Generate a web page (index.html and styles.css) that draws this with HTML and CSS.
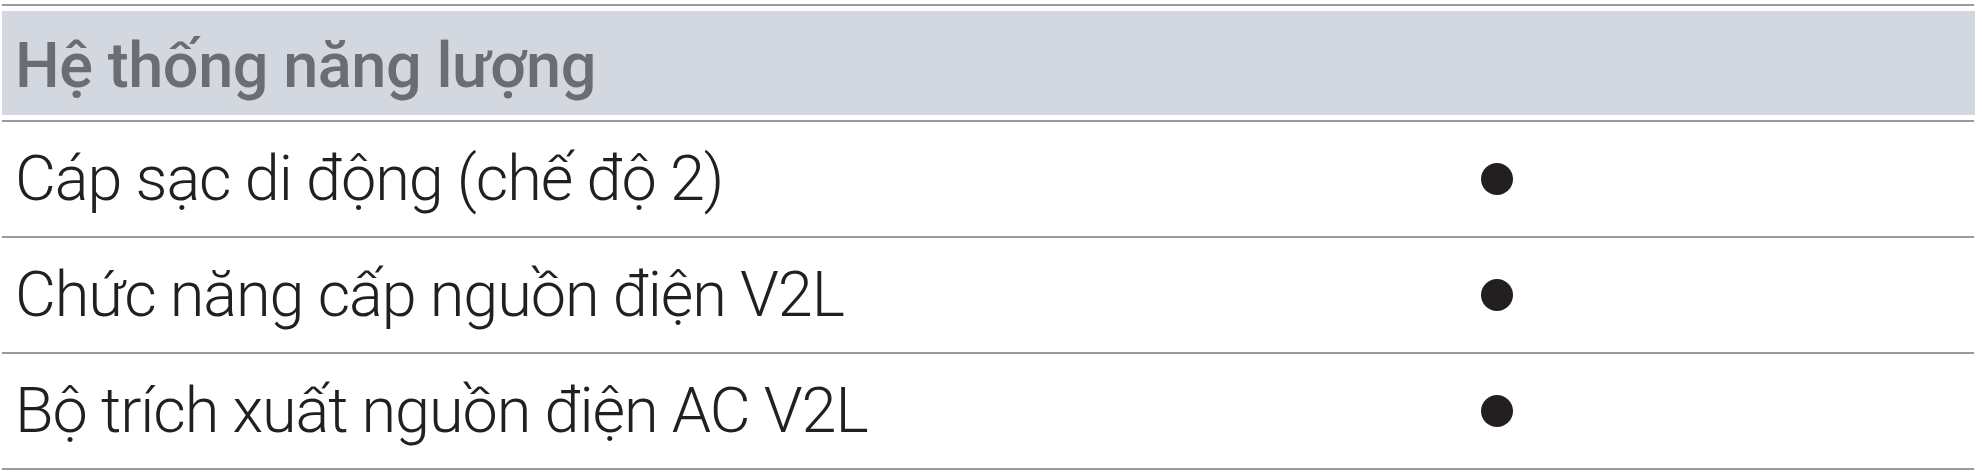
FILE: index.html
```html
<!DOCTYPE html>
<html lang="vi">
<head>
<meta charset="utf-8">
<title>Hệ thống năng lượng</title>
<link rel="stylesheet" href="styles.css">
</head>
<body>
<div class="spec-table">
  <div class="row header">
    <div class="header-bg">
      <div class="label header-label">Hệ thống năng lượng</div>
    </div>
  </div>
  <div class="row">
    <div class="label">Cáp sạc di động (chế độ 2)</div>
    <div class="mark"><span class="dot"></span></div>
    <div class="extra"></div>
  </div>
  <div class="row">
    <div class="label">Chức năng cấp nguồn điện V2L</div>
    <div class="mark"><span class="dot"></span></div>
    <div class="extra"></div>
  </div>
  <div class="row">
    <div class="label">Bộ trích xuất nguồn điện AC V2L</div>
    <div class="mark"><span class="dot"></span></div>
    <div class="extra"></div>
  </div>
</div>
</body>
</html>
```
FILE: styles.css
```css
html, body {
  margin: 0;
  padding: 0;
  background: #ffffff;
}

.spec-table {
  margin: 4px 0 0 2px;
  width: 1972px;
  border-top: 2px solid #999a9c;
  font-family: Roboto, "Liberation Sans", sans-serif;
}

.row {
  display: grid;
  grid-template-columns: 1418px 154px 400px;
  align-items: center;
  height: 114px;
  border-bottom: 2px solid #999a9c;
}

.row.header {
  display: block;
  padding: 5px 0;
  height: 104px;
}

.header-bg {
  height: 104px;
  width: 1973px;
  background: #d3d8e0;
  display: flex;
  align-items: center;
}

.label {
  padding-left: 13px;
  font-size: 63px;
  font-weight: 300;
  letter-spacing: -1.1px;
  color: #231f20;
  white-space: nowrap;
  line-height: 1.2;
}

.header-label {
  font-weight: 500;
  letter-spacing: -0.45px;
  color: #6a6e72;
  padding-top: 6px;
}

.mark {
  display: flex;
  justify-content: center;
  align-items: center;
}

.dot {
  width: 32px;
  height: 32px;
  border-radius: 50%;
  background: #231f20;
}
```
